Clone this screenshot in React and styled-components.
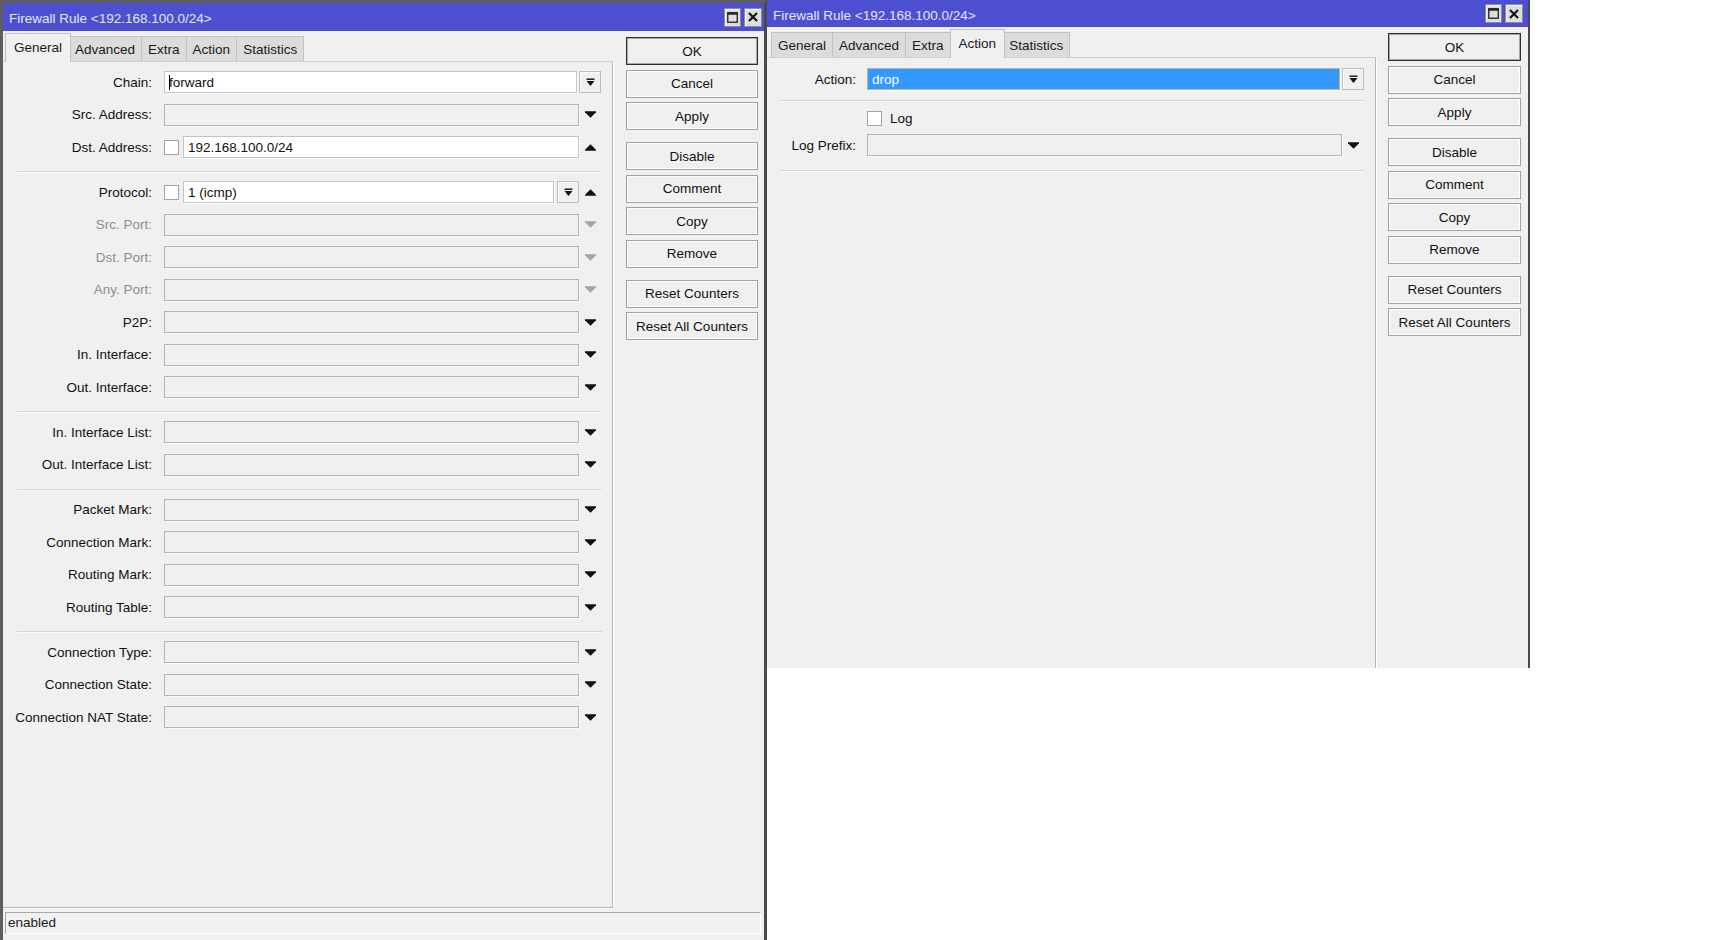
import React from "react";
import styled, { createGlobalStyle } from "styled-components";

const GlobalStyle = createGlobalStyle`
  html, body {
    margin: 0;
    padding: 0;
    background: #ffffff;
  }
  body {
    font-family: "Liberation Sans", Arial, sans-serif;
    font-size: 13.5px;
    color: #111111;
  }
  * {
    box-sizing: border-box;
  }
`;

const Desktop = styled.div`
  display: flex;
  align-items: flex-start;
  width: 1736px;
  height: 940px;
  overflow: hidden;
  background: #ffffff;
`;

const Window = styled.div`
  display: flex;
  flex-direction: column;
  flex-shrink: 0;
  width: ${(p) => p.$width}px;
  height: ${(p) => p.$height}px;
  background: #f0f0f0;
  border-top: ${(p) => p.$bt}px solid #5e5e5e;
  border-left: ${(p) => p.$bl}px solid #5e5e5e;
  border-right: ${(p) => p.$br}px solid #4a4a4a;
`;

const TitleBar = styled.div`
  display: flex;
  align-items: center;
  flex-shrink: 0;
  height: ${(p) => p.$height}px;
  padding: 0 ${(p) => p.$padRight}px 0 6px;
  background: #4c50d0;
`;

const TitleText = styled.span`
  padding-top: 3px;
  color: #e6e6f6;
  font-size: 13.5px;
  white-space: nowrap;
`;

const TitleButtons = styled.div`
  display: flex;
  gap: 3px;
  margin-left: auto;
`;

const TitleButton = styled.div`
  display: flex;
  align-items: center;
  justify-content: center;
  width: ${(p) => p.$w}px;
  height: 19px;
  background: #dedede;
  border: 1px solid #8c8c8c;
  box-shadow: inset 1px 1px 0 #f6f6f6;
`;

const Main = styled.div`
  display: flex;
  flex: 1;
  min-height: 0;
  padding-top: 2px;
`;

const LeftPane = styled.div`
  display: flex;
  flex-direction: column;
  flex-shrink: 0;
  width: ${(p) => p.$width}px;
`;

const TabBar = styled.div`
  display: flex;
  align-items: flex-end;
  height: 28px;
  padding-left: 4px;
  flex-shrink: 0;
`;

const Tab = styled.div`
  position: relative;
  z-index: ${(p) => (p.$active ? 2 : 1)};
  display: flex;
  align-items: center;
  height: ${(p) => (p.$active ? 29 : 25)}px;
  margin: 0 ${(p) => (p.$active ? -2 : 0)}px ${(p) => (p.$active ? -1 : 0)}px;
  padding: 0 ${(p) => (p.$active ? 8 : 6)}px ${(p) => (p.$active ? 1 : 0)}px;
  background: ${(p) => (p.$active ? "#f0f0f0" : "#dcdcdc")};
  border: 1px solid #c2c2c2;
  border-bottom: none;
  color: #1a1a1a;
  white-space: nowrap;

  & + & {
    margin-left: ${(p) => (p.$active ? -2 : -1)}px;
  }
`;

const Frame = styled.div`
  display: flex;
  flex-direction: column;
  flex: 1;
  min-height: 0;
  padding: ${(p) => p.$padTop}px 10px 0 10px;
  border-top: 1px solid #d0d0d0;
  border-right: 1px solid #b7b7b7;
  border-bottom: ${(p) => (p.$cut ? "none" : "1px solid #b7b7b7")};
  box-shadow: 1px 1px 0 #ffffff;
`;

const Row = styled.div`
  display: flex;
  align-items: center;
  flex-shrink: 0;
  height: 22px;
  margin-bottom: ${(p) => (p.$gap !== undefined ? p.$gap : 10.5)}px;
`;

const Label = styled.div`
  flex-shrink: 0;
  width: ${(p) => p.$width}px;
  margin-right: ${(p) => p.$gap}px;
  text-align: right;
  white-space: nowrap;
  color: ${(p) => (p.$disabled ? "#8e8e8e" : "#111111")};
`;

const Field = styled.div`
  display: flex;
  align-items: center;
  flex-shrink: 0;
  width: ${(p) => p.$width}px;
  height: 22px;
`;

const Slot = styled.div`
  display: flex;
  align-items: center;
  justify-content: center;
  flex-shrink: 0;
  width: 22px;
  height: 22px;
`;

const TextBox = styled.div`
  display: flex;
  align-items: center;
  flex: 1;
  min-width: 0;
  height: 22px;
  margin-right: ${(p) => p.$mr || 0}px;
  padding-left: 4px;
  background: ${(p) =>
    p.$selected ? "#3399ff" : p.$filled ? "#ffffff" : "#f0f0f0"};
  color: ${(p) => (p.$selected ? "#ffffff" : "#111111")};
  border: 1px solid ${(p) => (p.$filled ? "#c4c4c4" : "#b4b4b4")};
  box-shadow: 1px 1px 0 #fbfbfb;
  white-space: nowrap;
  overflow: hidden;
`;

const Caret = styled.span`
  display: inline-block;
  width: 1px;
  height: 15px;
  margin-right: -1px;
  background: #000000;
`;

const CheckBox = styled.div`
  flex-shrink: 0;
  width: 15px;
  height: 15px;
  margin-right: ${(p) => p.$mr}px;
  background: #ffffff;
  border: 1px solid #a4a4a4;
`;

const ComboButton = styled.div`
  display: flex;
  align-items: center;
  justify-content: center;
  flex-shrink: 0;
  width: 22px;
  height: 22px;
  margin-left: ${(p) => p.$ml || 0}px;
  background: #f0f0f0;
  border: 1px solid #bdbdbd;
  box-shadow: inset 1px 1px 0 #fcfcfc;
`;

const CheckText = styled.span`
  color: #111111;
`;

const Separator = styled.div`
  flex-shrink: 0;
  height: 2px;
  margin: ${(p) => (p.$top !== undefined ? p.$top : 2.5)}px 0
    ${(p) => (p.$bottom !== undefined ? p.$bottom : 8)}px ${(p) => p.$inset}px;
  border-top: 1px solid #d8d8d8;
  border-bottom: 1px solid #fafafa;
`;

const ButtonColumn = styled.div`
  display: flex;
  flex-direction: column;
  flex-shrink: 0;
  width: ${(p) => p.$width}px;
  margin-left: ${(p) => p.$ml}px;
  padding-top: 2px;
`;

const ActionButton = styled.div`
  display: flex;
  align-items: center;
  justify-content: center;
  flex-shrink: 0;
  height: 28px;
  margin-top: ${(p) => (p.$group ? 12 : 4.5)}px;
  background: #f0f0f0;
  border: 1px solid ${(p) => (p.$default ? "#2e2e2e" : "#a2a2a2")};
  box-shadow: inset 0 0 0 1px ${(p) => (p.$default ? "#a8a8a8" : "#fdfdfd")};
  color: #111111;
  white-space: nowrap;

  &:first-child {
    margin-top: 2px;
  }
`;

const StatusBar = styled.div`
  flex-shrink: 0;
  height: 22px;
  margin: 4px 3px 6px 2px;
  padding-left: 2px;
  line-height: 20px;
  border-top: 1px solid #a9a9a9;
  border-left: 1px solid #a9a9a9;
  border-bottom: 1px solid #ffffff;
  border-right: 1px solid #ffffff;
  color: #1a1a1a;
`;

function DownArrow({ color = "#111" }) {
  return (
    <svg width="11" height="7" viewBox="0 0 11 7">
      <path d="M0 0.3H11V1.3L5.5 6.8L0 1.3Z" fill={color} />
    </svg>
  );
}

function UpArrow() {
  return (
    <svg width="11" height="7" viewBox="0 0 11 7">
      <path d="M0 6.7H11V5.7L5.5 0.2L0 5.7Z" fill="#111" />
    </svg>
  );
}

function ComboIcon() {
  return (
    <svg width="9" height="9" viewBox="0 0 9 9">
      <rect x="0.5" y="0.5" width="8" height="1.4" fill="#111" />
      <path d="M0.5 3H8.5L4.5 8Z" fill="#111" />
    </svg>
  );
}

function MaxIcon() {
  return (
    <svg width="11" height="11" viewBox="0 0 11 11">
      <rect x="0.75" y="0.75" width="9.5" height="9.5" fill="none" stroke="#222" strokeWidth="1.3" />
      <rect x="0.5" y="0.5" width="10" height="2.2" fill="#222" />
    </svg>
  );
}

function CloseIcon() {
  return (
    <svg width="10" height="10" viewBox="0 0 10 10">
      <path d="M1 1L9 9M9 1L1 9" stroke="#111" strokeWidth="2.2" />
    </svg>
  );
}

function Title({ height, padRight, text }) {
  return (
    <TitleBar $height={height} $padRight={padRight}>
      <TitleText>{text}</TitleText>
      <TitleButtons>
        <TitleButton $w={17}>
          <MaxIcon />
        </TitleButton>
        <TitleButton $w={18}>
          <CloseIcon />
        </TitleButton>
      </TitleButtons>
    </TitleBar>
  );
}

const TABS = ["General", "Advanced", "Extra", "Action", "Statistics"];

function Tabs({ active }) {
  return (
    <TabBar>
      {TABS.map((t) => (
        <Tab key={t} $active={t === active}>
          {t}
        </Tab>
      ))}
    </TabBar>
  );
}

function FieldRow({ row, labelWidth, labelGap, fieldWidth }) {
  const { label, disabled, check, value, combo, button, arrow, caret } = row;
  return (
    <Row>
      <Label $width={labelWidth} $gap={labelGap} $disabled={disabled}>
        {label}:
      </Label>
      <Field $width={fieldWidth}>
        {check && <CheckBox $mr={4} />}
        <TextBox $filled={!!value} $mr={combo ? 2 : 0}>
          {caret && <Caret />}
          {value}
        </TextBox>
        {button && (
          <ComboButton $ml={3}>
            <ComboIcon />
          </ComboButton>
        )}
      </Field>
      <Slot>
        {combo && (
          <ComboButton>
            <ComboIcon />
          </ComboButton>
        )}
        {arrow === "down" && <DownArrow color={disabled ? "#a3a6a3" : "#111"} />}
        {arrow === "up" && <UpArrow />}
      </Slot>
    </Row>
  );
}

const SEP = { sep: true };

const generalRows = [
  { label: "Chain", value: "forward", combo: true, caret: true },
  { label: "Src. Address", arrow: "down" },
  { label: "Dst. Address", check: true, value: "192.168.100.0/24", arrow: "up" },
  SEP,
  { label: "Protocol", check: true, value: "1 (icmp)", button: true, arrow: "up" },
  { label: "Src. Port", disabled: true, arrow: "down" },
  { label: "Dst. Port", disabled: true, arrow: "down" },
  { label: "Any. Port", disabled: true, arrow: "down" },
  { label: "P2P", arrow: "down" },
  { label: "In. Interface", arrow: "down" },
  { label: "Out. Interface", arrow: "down" },
  SEP,
  { label: "In. Interface List", arrow: "down" },
  { label: "Out. Interface List", arrow: "down" },
  SEP,
  { label: "Packet Mark", arrow: "down" },
  { label: "Connection Mark", arrow: "down" },
  { label: "Routing Mark", arrow: "down" },
  { label: "Routing Table", arrow: "down" },
  SEP,
  { label: "Connection Type", arrow: "down" },
  { label: "Connection State", arrow: "down" },
  { label: "Connection NAT State", arrow: "down" },
];

const BUTTONS = [
  { text: "OK", def: true },
  { text: "Cancel" },
  { text: "Apply" },
  { text: "Disable", group: true },
  { text: "Comment" },
  { text: "Copy" },
  { text: "Remove" },
  { text: "Reset Counters", group: true },
  { text: "Reset All Counters" },
];

function Buttons({ width, ml }) {
  return (
    <ButtonColumn $width={width} $ml={ml}>
      {BUTTONS.map((b) => (
        <ActionButton key={b.text} $default={b.def} $group={b.group}>
          {b.text}
        </ActionButton>
      ))}
    </ButtonColumn>
  );
}

const TITLE = "Firewall Rule <192.168.100.0/24>";

function GeneralWindow() {
  return (
    <Window $width={767} $height={940} $bt={3} $bl={3} $br={3}>
      <Title height={28} padRight={2} text={TITLE} />
      <Main>
        <LeftPane $width={610}>
          <Tabs active="General" />
          <Frame $padTop={9}>
            {generalRows.map((r, i) =>
              r.sep ? (
                <Separator key={i} $inset={4} />
              ) : (
                <FieldRow key={i} row={r} labelWidth={139} labelGap={12} fieldWidth={415} />
              )
            )}
          </Frame>
        </LeftPane>
        <Buttons width={132} ml={13} />
      </Main>
      <StatusBar>enabled</StatusBar>
    </Window>
  );
}

function ActionWindow() {
  return (
    <Window $width={763} $height={668} $bt={0} $bl={0} $br={2}>
      <Title height={27} padRight={5} text={TITLE} />
      <Main>
        <LeftPane $width={609}>
          <Tabs active="Action" />
          <Frame $padTop={10} $cut>
            <Row $gap={9}>
              <Label $width={79} $gap={11}>
                Action:
              </Label>
              <Field $width={475}>
                <TextBox $selected $mr={2}>
                  drop
                </TextBox>
              </Field>
              <Slot>
                <ComboButton>
                  <ComboIcon />
                </ComboButton>
              </Slot>
            </Row>
            <Separator $inset={2} $top={1} $bottom={5.5} />
            <Row $gap={4.5}>
              <Label $width={79} $gap={11} />
              <Field $width={475}>
                <CheckBox $mr={8} />
                <CheckText>Log</CheckText>
              </Field>
            </Row>
            <Row>
              <Label $width={79} $gap={11}>
                Log Prefix:
              </Label>
              <Field $width={475}>
                <TextBox />
              </Field>
              <Slot>
                <DownArrow />
              </Slot>
            </Row>
            <Separator $inset={2} $top={3.5} />
          </Frame>
        </LeftPane>
        <Buttons width={133} ml={12} />
      </Main>
    </Window>
  );
}

export default function App() {
  return (
    <>
      <GlobalStyle />
      <Desktop>
        <GeneralWindow />
        <ActionWindow />
      </Desktop>
    </>
  );
}
